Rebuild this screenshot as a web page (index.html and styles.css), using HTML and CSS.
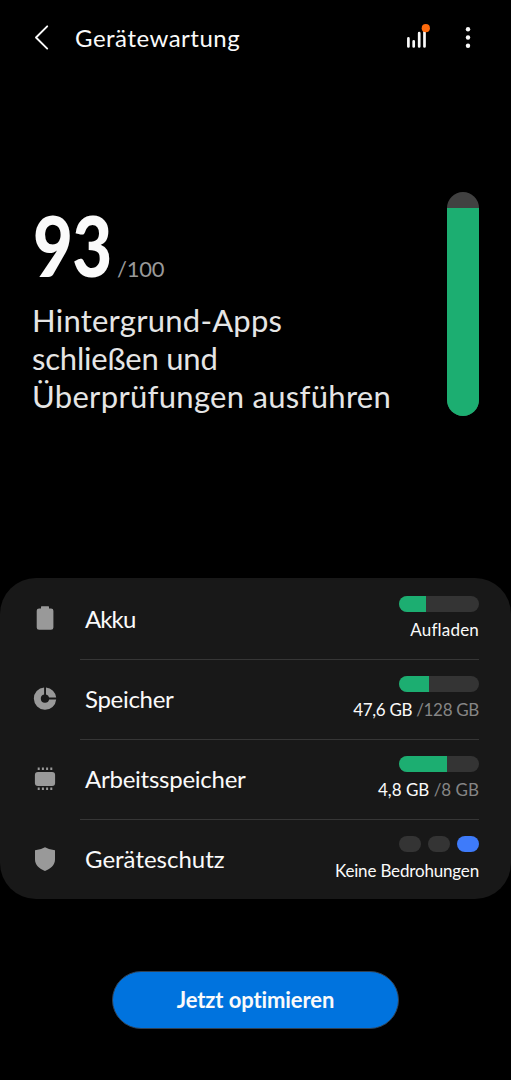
FILE: index.html
```html
<!DOCTYPE html>
<html lang="de">
<head>
<meta charset="utf-8">
<meta name="viewport" content="width=device-width, initial-scale=1">
<title>Gerätewartung</title>
<link rel="stylesheet" href="styles.css">
</head>
<body>
<main class="screen">
  <header class="topbar">
    <svg class="back" width="16" height="28" viewBox="0 0 16 28"><path d="M14.200 2.300 3 13.500 14.200 24.600"/></svg>
    <h1 class="title">Gerätewartung</h1>
    <svg class="chart" width="28" height="28" viewBox="0 0 28 28"><path class="bars" d="M3.400 14.400V22.500M8.700 17.400V22.500M14.200 9.200V22.500M19.500 8V22.500"/><circle class="dot" cx="20.800" cy="4.200" r="4.100"/></svg>
    <svg class="more" width="8" height="28" viewBox="0 0 8 28"><circle cx="4" cy="5.200" r="2.200"/><circle cx="4" cy="13.500" r="2.200"/><circle cx="4" cy="21.800" r="2.200"/></svg>
  </header>

  <section class="summary">
    <div class="status">
      <div class="score"><span class="value">93</span><span class="max">/100</span></div>
      <p class="advice"><span class="line line-1">Hintergrund-Apps</span><span class="line line-2">schließen und</span><span class="line line-3">Überprüfungen ausführen</span></p>
    </div>
    <div class="gauge"><div class="gauge-fill"></div></div>
  </section>

  <section class="card">
    <div class="row">
      <svg class="icon" width="26" height="26" viewBox="0 0 26 26"><path d="M9.600 1.200h6.800q.6 0 .6.600v1.600h2a2.400 2.400 0 0 1 2.400 2.400v16.600a2.400 2.400 0 0 1-2.400 2.400H7.100a2.400 2.400 0 0 1-2.400-2.400V5.800a2.400 2.400 0 0 1 2.400-2.400H9V1.800q0-.6.600-.600z"/></svg>
      <div class="content"><span class="name akku">Akku</span>
        <div class="info"><div class="meter"><div class="fill" style="width:33.500%"></div></div><div class="detail charge">Aufladen</div></div></div>
    </div>
    <div class="row">
      <svg class="icon" width="26" height="26" viewBox="0 0 26 26"><path d="M12.100 1.400A11.200 11.200 0 1 0 24.200 13.500H17.100A4.200 4.200 0 1 1 12.100 8.500ZM14 1.400A11.200 11.200 0 0 1 24.200 11.600H17.100A4.200 4.200 0 0 0 14 8.500Z"/></svg>
      <div class="content"><span class="name speicher">Speicher</span>
        <div class="info"><div class="meter"><div class="fill" style="width:38%"></div></div><div class="detail storage">47,6 GB <span class="total">/128 GB</span></div></div></div>
    </div>
    <div class="row">
      <svg class="icon" width="26" height="26" viewBox="0 0 26 26"><rect x="2.900" y="6" width="20.200" height="14" rx="3"/><path class="pins" d="M6.700 1.500v2.500M10.900 1.500v2.500M15.100 1.500v2.500M19.300 1.500v2.500M6.700 21.500v2.500M10.900 21.500v2.500M15.100 21.500v2.500M19.300 21.500v2.500"/></svg>
      <div class="content"><span class="name memory">Arbeitsspeicher</span>
        <div class="info"><div class="meter"><div class="fill" style="width:60%"></div></div><div class="detail ram">4,8 GB <span class="total">/8 GB</span></div></div></div>
    </div>
    <div class="row">
      <svg class="icon" width="26" height="26" viewBox="0 0 26 26"><path d="M13 1.300Q17.500 4 23 4.300V13.500C23 19 18.700 22.700 13 25 7.300 22.700 3 19 3 13.500V4.300Q8.500 4 13 1.300Z"/></svg>
      <div class="content"><span class="name shield">Geräteschutz</span>
        <div class="info"><div class="levels"><i></i><i></i><i class="active"></i></div><div class="detail threats">Keine Bedrohungen</div></div></div>
    </div>
  </section>

  <button class="optimize">Jetzt optimieren</button>
</main>
</body>
</html>
```
FILE: styles.css
```css
* { box-sizing: border-box; }
body { margin: 0; background: #000; color: #fafafa; font-family: "Choco Cooky", Lato, sans-serif; }
.screen { width: 511px; height: 1080px; display: flex; flex-direction: column; overflow: hidden; }
svg { display: block; flex: none; }

.topbar { height: 76px; padding-left: 33px; display: flex; align-items: center; }
.back { fill: none; stroke: #fafafa; stroke-width: 1.9; stroke-linecap: round; stroke-linejoin: round; }
.title { margin: 0 0 0 26px; width: 330px; font-size: 24px; font-weight: 400; line-height: 30px; letter-spacing: .5px; white-space: nowrap; }
.chart { margin: 0; }
.bars { fill: none; stroke: #fafafa; stroke-width: 2.7; stroke-linecap: round; }
.dot { fill: #ff6a0c; }
.more { margin-left: 31px; fill: #fafafa; }

.summary { height: 502px; padding: 116px 32px 0 33px; display: flex; justify-content: space-between; align-items: flex-start; }
.status { padding-top: 11px; }
.score { height: 88px; display: flex; align-items: baseline; line-height: 84px; white-space: nowrap; }
.value { font-size: 84px; font-weight: 900; letter-spacing: -1px; width: 84px; transform: scaleX(.82); transform-origin: left; }
.max { color: #999; font-size: 22px; letter-spacing: -.2px; }
.advice { margin: 10px 0 0; color: #e5e5e5; font-size: 31px; line-height: 38px; white-space: nowrap; }
.line { display: block; margin-left: -1px; }
.line-1 { letter-spacing: .25px; }
.line-2 { letter-spacing: -.2px; }
.line-3 { letter-spacing: .3px; }
.gauge { width: 32px; height: 224px; display: flex; flex-direction: column; justify-content: flex-end; border-radius: 16px; background: #414141; overflow: hidden; }
.gauge-fill { height: 208px; background: #1cae71; }

.card { height: 321px; padding: 0 32px; display: grid; grid-template-rows: 81px 80px 80px 80px; border-radius: 36px; background: #181818; }
.row { display: flex; }
.icon { margin: 27px 22px 0 0; fill: #999; }
.pins { fill: none; stroke: #999; stroke-width: 2; }
.content { flex: 1; display: flex; justify-content: space-between; border-top: 1px solid #363636; }
.row:first-child .content { border-top-color: transparent; }
.name { padding: 24px 0 0 5px; font-size: 24px; line-height: 30px; white-space: nowrap; }
.row:first-child .name { padding-top: 25px; }
.akku { letter-spacing: -.9px; }
.speicher { letter-spacing: -.3px; }
.memory { letter-spacing: -.25px; }
.info { padding-top: 16px; display: flex; flex-direction: column; align-items: flex-end; }
.row:first-child .info { padding-top: 17px; }
.meter { width: 80px; height: 16px; border-radius: 8px; background: #343434; overflow: hidden; }
.fill { height: 100%; background: #1cae71; }
.levels { width: 80px; height: 16px; display: flex; justify-content: space-between; }
.levels i { width: 22px; height: 16px; border-radius: 8px; background: #343434; }
.levels .active { background: #3e7bfa; }
.detail { margin-top: 7px; font-size: 17px; line-height: 22px; white-space: nowrap; }
.charge { letter-spacing: .2px; }
.storage { letter-spacing: -.32px; }
.threats { margin-top: 8px; letter-spacing: -.17px; }
.total { color: #858585; }

.optimize { width: 287px; height: 58px; margin: 72px 0 0 112px; padding: 0; border: 1px solid #304052; border-radius: 29px; background: #0073de; color: #fafafa; font: 700 22px/54px "Choco Cooky", Lato, sans-serif; letter-spacing: -.1px; }
```
